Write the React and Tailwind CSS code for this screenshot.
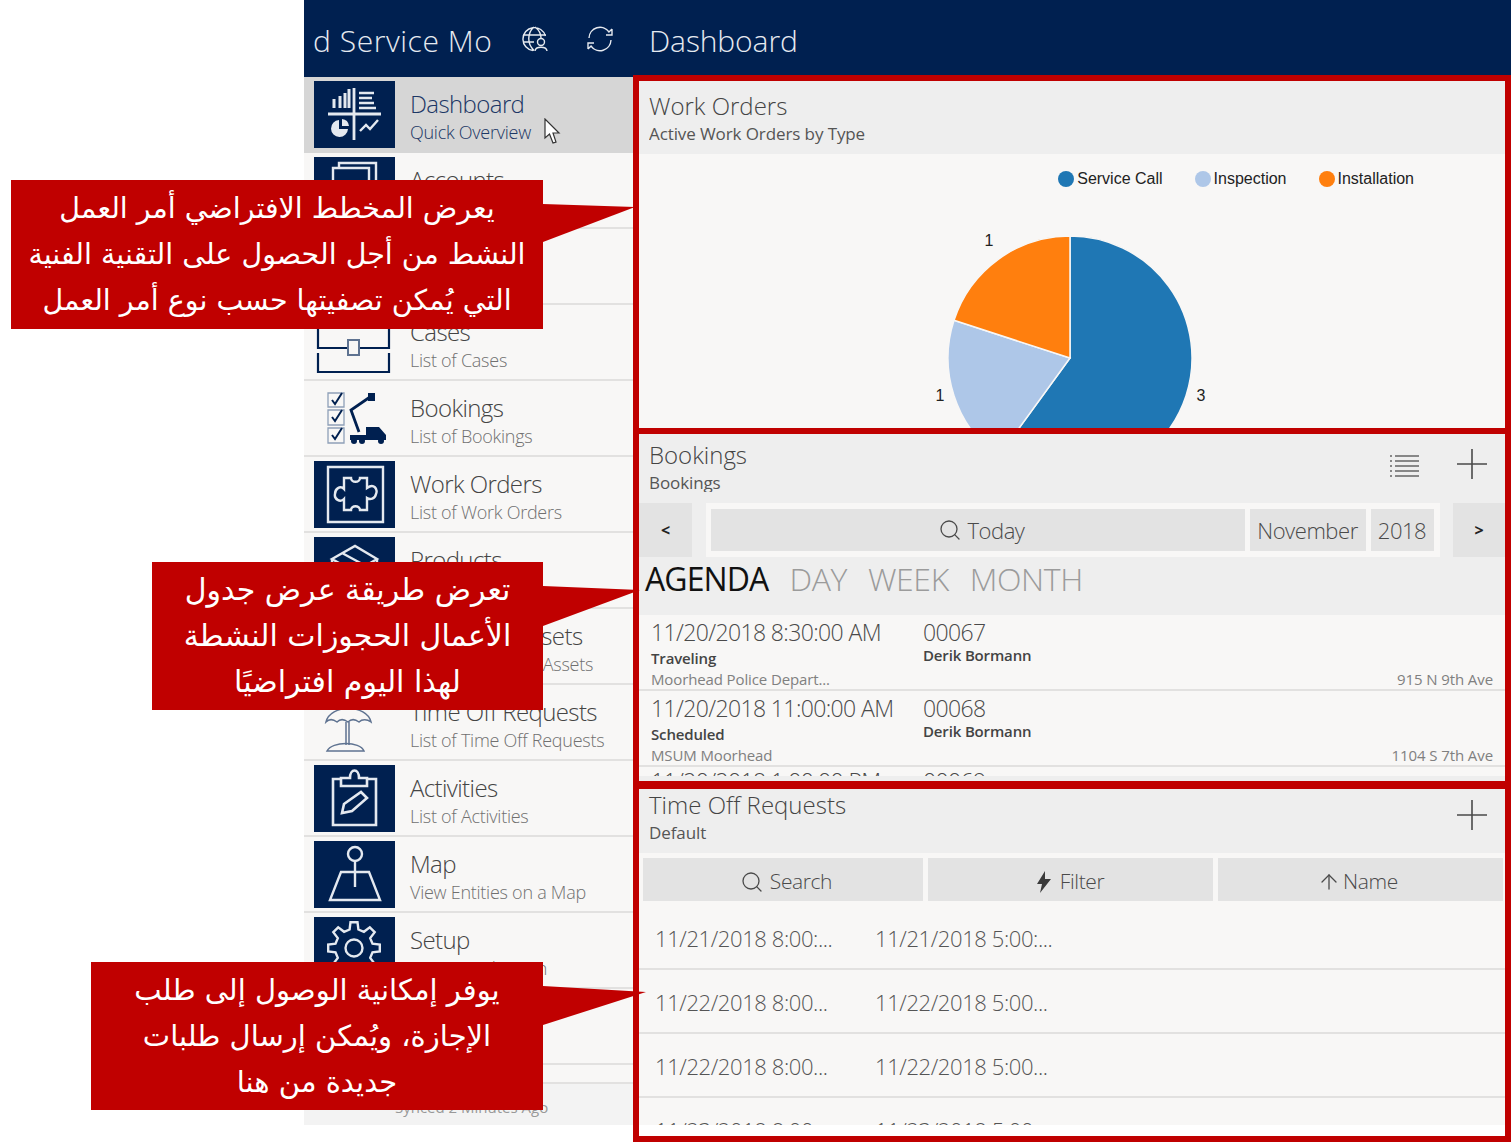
import { Search, ArrowUp } from 'lucide-react'

const navy = '#002050'

function IconBox({ children }) {
  return (
    <div className="h-[67px] w-[81px] shrink-0 bg-[#002050]">
      <svg viewBox="0 0 81 67" className="h-full w-full" fill="none" stroke="#e4e9f0" strokeWidth="2.4">
        {children}
      </svg>
    </div>
  )
}

function PlainIcon({ children }) {
  return (
    <div className="h-[67px] w-[81px] shrink-0">
      <svg viewBox="0 0 81 67" className="h-full w-full" fill="none" stroke={navy} strokeWidth="2">
        {children}
      </svg>
    </div>
  )
}

// eight toothed gear outline for the setup tile
function gearPath(cx, cy, outer, inner, teeth) {
  const pts = []
  const step = (Math.PI * 2) / teeth
  for (let i = 0; i < teeth; i++) {
    const a = i * step - Math.PI / 2
    const at = (r, o) => `${(cx + r * Math.cos(a + o)).toFixed(1)} ${(cy + r * Math.sin(a + o)).toFixed(1)}`
    pts.push(at(outer, -step * 0.17), at(outer, step * 0.17), at(inner, step * 0.3), at(inner, step * 0.7))
  }
  return `M${pts.join('L')}Z`
}

const icons = {
  dashboard: (
    <IconBox>
      <path d="M14 33H67M40 7V59" strokeWidth="2.8" />
      <path d="M20 27V18M26 27V15M31 27V12M35 27V8" strokeWidth="3" />
      <path d="M45 12H60M45 17H58M45 22H60M45 27H62" strokeWidth="2.4" />
      <path d="M25 39A8.500 8.500 0 1 0 34 48H25Z" fill="#e4e9f0" stroke="none" />
      <path d="M28 38A8 8 0 0 1 35 45H28Z" fill="#e4e9f0" stroke="none" />
      <path d="M46 50l6-6 4 4 8-9" />
    </IconBox>
  ),
  accounts: (
    <IconBox>
      <path d="M25 11V6H62V42" />
      <path d="M19 11H55V58H19Z" />
    </IconBox>
  ),
  contacts: (
    <IconBox>
      <circle cx="40" cy="24" r="10" />
      <path d="M20 56C22 40 58 40 60 56" />
    </IconBox>
  ),
  cases: (
    <PlainIcon>
      <path d="M4 20V39H34M45 39H75V20" strokeWidth="2.2" />
      <path d="M4 44V63H75V44" strokeWidth="2.2" />
      <rect x="34" y="31" width="11" height="15" stroke="#5f7391" />
    </PlainIcon>
  ),
  bookings: (
    <PlainIcon>
      <path d="M14 8H30V22H14ZM14 25H30V40H14ZM14 43H30V58H14Z" stroke="#8ea0b8" strokeWidth="1.3" />
      <path d="M18 15l3 4 7-11M18 32l3 4 7-11M18 50l3 4 7-11" />
      <path d="M45 47L37 25 56 12" strokeWidth="2.800" />
      <rect x="54" y="8" width="7" height="8" fill={navy} stroke="none" />
      <path d="M36 50H52V42H65L72 50V55H36Z" fill={navy} stroke="none" />
      <circle cx="40" cy="56" r="3" fill={navy} stroke="none" />
      <circle cx="48" cy="56" r="3" fill={navy} stroke="none" />
      <circle cx="67" cy="56" r="3" fill={navy} stroke="none" />
    </PlainIcon>
  ),
  workorders: (
    <IconBox>
      <path d="M14 6H69V61H14Z" />
      <path d="M30 17H37C37 22 46 22 46 17H53V27C60 22 64 28 62 33 61 38 56 39 53 37V49H46C46 44 37 44 37 49H30V38C26 42 20 38 21 33 21 28 26 24 30 28Z" />
    </IconBox>
  ),
  products: (
    <IconBox>
      <path d="M18 22L41 9 63 22 41 35ZM18 22V48L41 60 63 48V22M41 35V60M28 16L52 29" />
    </IconBox>
  ),
  assets: (
    <PlainIcon>
      <rect x="20" y="15" width="40" height="40" />
    </PlainIcon>
  ),
  timeoff: (
    <PlainIcon>
      <path d="M12 33C16 15 53 15 57 33C53 30 48 30 45 33C41 30 37 30 34 33C30 30 26 30 23 33C19 30 15 30 12 33Z" stroke="#5f7391" strokeWidth="1.5" />
      <path d="M32 33V56M35 33V56" stroke="#5f7391" strokeWidth="1.5" />
      <path d="M13 62C18 52 46 52 50 62Z" stroke="#5f7391" strokeWidth="1.5" />
    </PlainIcon>
  ),
  activities: (
    <IconBox>
      <path d="M27 14H19V60H62V14H53" strokeWidth="2.6" />
      <path d="M27 21V13H36C36 3 45 3 45 13H53V21Z" strokeWidth="2.6" />
      <path d="M28 48L30 39 47 27 53 33 38 46Z" strokeWidth="2.6" />
    </IconBox>
  ),
  map: (
    <IconBox>
      <circle cx="41" cy="13" r="7" />
      <path d="M41 20V46" />
      <path d="M27 31H55L66 59H16Z" />
    </IconBox>
  ),
  setup: (
    <IconBox>
      <circle cx="40" cy="31" r="8.500" />
      <path d={gearPath(40, 31, 26, 19, 8)} />
    </IconBox>
  ),
  blank: <div className="h-[67px] w-[81px] shrink-0" />,
}

const navItems = [
  { icon: 'dashboard', title: 'Dashboard', sub: 'Quick Overview', active: true },
  { icon: 'accounts', title: 'Accounts', sub: 'List of Accounts' },
  { icon: 'contacts', title: 'Contacts', sub: 'List of Contacts' },
  { icon: 'cases', title: 'Cases', sub: 'List of Cases' },
  { icon: 'bookings', title: 'Bookings', sub: 'List of Bookings' },
  { icon: 'workorders', title: 'Work Orders', sub: 'List of Work Orders' },
  { icon: 'products', title: 'Products', sub: 'List of Products' },
  { icon: 'assets', title: 'Customer Assets', sub: 'List of Customer Assets' },
  { icon: 'timeoff', title: 'Time Off Requests', sub: 'List of Time Off Requests' },
  { icon: 'activities', title: 'Activities', sub: 'List of Activities' },
  { icon: 'map', title: 'Map', sub: 'View Entities on a Map' },
  { icon: 'setup', title: 'Setup', sub: 'Setup Application' },
  { icon: 'blank', title: 'Sync', sub: 'Sync Data' },
]

function NavItem({ item }) {
  return (
    <div className={`flex h-[76px] items-center gap-[15px] border-b-2 pl-[10px] ${item.active ? 'border-[#d6d6d6] bg-[#d6d6d6]' : 'border-[#e2e1e0]'}`}>
      {icons[item.icon]}
      <div className="pt-[5px]">
        <div className={`text-[24px] leading-[31px] tracking-[-0.6px] font-light ${item.active ? 'text-[#1c3765]' : 'text-[#444444]'}`}>{item.title}</div>
        <div className={`text-[18px] leading-[26px] tracking-[-0.26px] font-light ${item.active ? 'text-[#1c3765]' : 'text-[#707070]'}`}>{item.sub}</div>
      </div>
    </div>
  )
}

function Plus() {
  return (
    <svg viewBox="0 0 32 32" className="h-8 w-8" fill="none" stroke="#4a4a4a" strokeWidth="1.6">
      <path d="M16 1V31M1 16H31" />
    </svg>
  )
}

function PanelHead({ title, sub, subClass, children, className }) {
  return (
    <div className={`flex shrink-0 justify-between bg-[#eeeeee] pl-[10px] ${className}`}>
      <div>
        <div className="text-[24px] leading-[32px] font-light text-[#444444]">{title}</div>
        <div className={`overflow-hidden text-[17px] leading-[24px] tracking-[-0.1px] text-[#555555] ${subClass}`}>{sub}</div>
      </div>
      {children}
    </div>
  )
}

function Legend({ color, label }) {
  return (
    <div className="flex items-center gap-[3px]">
      <span className="h-4 w-4 rounded-full" style={{ background: color }} />
      <span className="font-['Liberation_Sans',sans-serif] text-[16px] text-[#222222]">{label}</span>
    </div>
  )
}

function WorkOrdersPanel() {
  return (
    <section className="flex h-[347px] flex-col overflow-hidden bg-[#f8f7f6]">
      <PanelHead title="Work Orders" sub="Active Work Orders by Type" className="h-[73px] pt-[9px]" />
      <div className="flex justify-end gap-[32px] pt-[13px] pr-[91px]">
        <Legend color="#1f77b4" label="Service Call" />
        <Legend color="#aec7e8" label="Inspection" />
        <Legend color="#ff7f0e" label="Installation" />
      </div>
      <svg viewBox="0 0 866 240" className="mt-[10px] h-[240px] w-[866px] shrink-0">
        <g stroke="#f8f7f6" strokeWidth="1.5">
          <path d="M431 157V35A122 122 0 1 1 359.3 255.7Z" fill="#1f77b4" />
          <path d="M431 157L359.3 255.7A122 122 0 0 1 315 119.3Z" fill="#aec7e8" />
          <path d="M431 157L315 119.3A122 122 0 0 1 431 35Z" fill="#ff7f0e" />
        </g>
        <g fontFamily="Liberation Sans, sans-serif" fontSize="16" fill="#222222" textAnchor="middle">
          <text x="350" y="45">1</text>
          <text x="301" y="200">1</text>
          <text x="562" y="200">3</text>
        </g>
      </svg>
    </section>
  )
}

function Booking({ time, no, status, place, address, className = '' }) {
  return (
    <div className={`flex h-[76px] shrink-0 border-b-2 border-[#e2e1e0] pr-3 pl-3 ${className}`}>
      <div className="w-[272px] shrink-0">
        <div className="text-[23px] leading-[35px] tracking-[-0.62px] font-light text-[#4a4a4a]">{time}</div>
        <div className="-mt-[2px] text-[15px] leading-[20px] font-semibold tracking-[-0.15px] text-[#444444]">{status}</div>
        <div className="mt-px text-[15px] leading-[21px] tracking-[-0.12px] text-[#808080]">{place}</div>
      </div>
      <div className="flex grow flex-col">
        <div className="text-[23px] leading-[35px] tracking-[-0.62px] font-light text-[#4a4a4a]">{no}</div>
        <div className="-mt-[2px] text-[15px] leading-[14px] font-semibold tracking-[-0.15px] text-[#444444]">Derik Bormann</div>
        <div className="mt-auto -mb-px self-end text-[15px] leading-[21px] tracking-[-0.09px] text-[#808080]">{address}</div>
      </div>
    </div>
  )
}

function BookingsPanel() {
  return (
    <section className="flex h-[347px] flex-col overflow-hidden bg-[#eeeeee]">
      <PanelHead title="Bookings" sub="Bookings" subClass="h-[21px]" className="h-[69px] overflow-hidden pt-[5px]">
        <div className="flex items-start gap-[36px] pt-[9px] pr-[17px]">
          <svg viewBox="0 0 32 32" className="mt-px h-8 w-8" fill="none" stroke="#666666" strokeWidth="1.6">
            <path d="M7 7H31M7 12H31M7 17H31M7 22H31M7 27H31" />
            <path d="M2 7H4M2 12H4M2 17H4M2 22H4M2 27H4" />
          </svg>
          <Plus />
        </div>
      </PanelHead>
      <div className="flex h-[54px] shrink-0 justify-between">
        <div className="grid w-[53px] place-items-center bg-[#e3e3e3] text-[16px] font-bold text-[#222222]">&lt;</div>
        <div className="flex w-[734px] gap-[5px] bg-[#f8f7f6] p-[6px] pl-[5px] text-[22px] tracking-[-0.45px] font-light text-[#4a4a4a]">
          <div className="flex grow items-center justify-center gap-[5px] bg-[#e3e3e3] pl-[8px]">
            <Search size={24} strokeWidth={1.3} />
            Today
          </div>
          <div className="grid w-[116px] place-items-center bg-[#e3e3e3]">November</div>
          <div className="grid w-[63px] place-items-center bg-[#e3e3e3]">2018</div>
        </div>
        <div className="grid w-[52px] place-items-center bg-[#e3e3e3] text-[16px] font-bold text-[#222222]">&gt;</div>
      </div>
      <div className="flex h-[58px] shrink-0 items-center gap-[21px] pb-[14px] pl-[6px] text-[32px] tracking-[-0.4px] font-light text-[#9b9b9b]">
        <span className="font-normal tracking-[-0.9px] text-[#111111]">AGENDA</span>
        <span>DAY</span>
        <span>WEEK</span>
        <span>MONTH</span>
      </div>
      <div className="flex h-[161px] shrink-0 flex-col overflow-hidden bg-[#f8f7f6]">
        <Booking time="11/20/2018 8:30:00 AM" no="00067" status="Traveling" place="Moorhead Police Depart..." address="915 N 9th Ave" />
        <Booking time="11/20/2018 11:00:00 AM" no="00068" status="Scheduled" place="MSUM Moorhead" address="1104 S 7th Ave" />
        <Booking className="-mt-[3px]" time="11/20/2018 1:00:00 PM" no="00069" status="Scheduled" place="Moorhead" address="" />
      </div>
    </section>
  )
}

function ToolButton({ children, className }) {
  return <div className={`flex h-[43px] items-center justify-center bg-[#e3e3e3] pt-1 text-[21px] tracking-[-0.4px] font-light text-[#4a4a4a] ${className}`}>{children}</div>
}

function OffRow({ from, to }) {
  return (
    <div className="flex h-[64px] shrink-0 items-center border-b-2 border-[#e2e1e0] pt-[2px] pl-4 text-[22px] tracking-[-0.4px] font-light text-[#555555]">
      <span className="w-[220px]">{from}</span>
      <span>{to}</span>
    </div>
  )
}

function TimeOffPanel() {
  return (
    <section className="flex h-[347px] flex-col bg-white">
      <PanelHead title="Time Off Requests" sub="Default" className="h-[64px]">
        <div className="pt-[10px] pr-[17px]">
          <Plus />
        </div>
      </PanelHead>
      <div className="flex h-[272px] flex-col overflow-hidden bg-[#f8f7f6]">
        <div className="flex shrink-0 gap-[5px] pt-[5px] pl-[4px]">
          <ToolButton className="w-[280px] gap-[6px] pl-[6px]">
            <Search size={24} strokeWidth={1.3} />
            Search
          </ToolButton>
          <ToolButton className="w-[285px] gap-[9px]">
            <svg viewBox="0 0 14 22" className="h-[22px] w-[14px]" fill="#3a3a3a">
              <path d="M8 0L0 13H5L3 22L14 8H8Z" />
            </svg>
            Filter
          </ToolButton>
          <ToolButton className="w-[285px] gap-[2px] pr-[6px]">
            <ArrowUp size={24} strokeWidth={1.3} />
            Name
          </ToolButton>
        </div>
        <div className="mt-[5px] flex flex-col">
          <OffRow from="11/21/2018 8:00:..." to="11/21/2018 5:00:..." />
          <OffRow from="11/22/2018 8:00..." to="11/22/2018 5:00..." />
          <OffRow from="11/22/2018 8:00..." to="11/22/2018 5:00..." />
          <OffRow from="11/23/2018 8:00..." to="11/23/2018 5:00..." />
        </div>
      </div>
    </section>
  )
}

function Callout({ lines, className, tail, textSize }) {
  return (
    <div className={`absolute bg-[#c00000] ${className}`}>
      <div dir="rtl" className={`flex h-full flex-col items-center justify-center font-['DejaVu_Sans',sans-serif] leading-[46px] text-white ${textSize}`}>
        {lines.map(line => (
          <div key={line} className="whitespace-nowrap">
            {line}
          </div>
        ))}
      </div>
      <svg className="absolute top-[24px] left-full h-[40px] w-[104px]" viewBox="0 0 104 40" fill="#c00000">
        <polygon points={tail} />
      </svg>
    </div>
  )
}

export default function App() {
  return (
    <div className="relative flex h-[1142px] w-[1511px] overflow-hidden bg-white font-['Open_Sans',sans-serif]">
      <div className="w-[304px] shrink-0" />
      <div className="flex grow flex-col">
        <header className="flex h-[75px] shrink-0 items-center bg-[#002050] text-[#e6eaf0]">
          <div className="flex w-[345px] items-center pl-[9px]">
            <span className="w-[208px] pt-[6px] text-[30px] tracking-[0.55px] font-light">d Service Mo</span>
            <svg viewBox="0 0 28 28" className="mt-[3px] h-7 w-7" fill="none" stroke="#e6eaf0" strokeWidth="1.4">
              <path d="M24.500 11A11.500 11.500 0 1 0 12 25.500M2 10H25M2 17H13M13 2C6 8 6 19 13 25.500M14 2C18 5 20 9 20 13" />
              <circle cx="20" cy="17" r="3.500" />
              <path d="M14 26C14.500 21 25.500 21 26 26" />
            </svg>
            <svg viewBox="0 0 28 28" className="mt-[3px] ml-[37px] h-7 w-7" fill="none" stroke="#e6eaf0" strokeWidth="1.4">
              <path d="M3 13A11 11 0 0 1 23 7L26 4M26 4V10H20" />
              <path d="M25 15A11 11 0 0 1 5 21L2 24M2 24V18H8" />
            </svg>
          </div>
          <span className="pt-[6px] text-[30px] tracking-[-0.1px] font-light">Dashboard</span>
        </header>
        <div className="flex grow">
          <aside className="flex h-[1050px] w-[329px] shrink-0 flex-col border-t-2 border-[#002050] bg-[#f8f7f6]">
            {navItems.map(item => (
              <NavItem key={item.title} item={item} />
            ))}
            <div className="h-[19px] shrink-0 border-b-2 border-[#e2e1e0]" />
            <div className="grow bg-[#f3f3f3] pt-[12px] pl-[91px] text-[15px] text-[#999999]">Synced 2 Minutes Ago</div>
          </aside>
          <main className="flex grow flex-col bg-[#c00000] p-[6px]">
            <WorkOrdersPanel />
            <div className="h-[6px] shrink-0" />
            <BookingsPanel />
            <div className="h-[8px] shrink-0" />
            <TimeOffPanel />
          </main>
        </div>
      </div>

      {/* cursor over the active nav item */}
      <svg viewBox="0 0 17 27" className="absolute top-[118px] left-[544px] h-[27px] w-[17px]" fill="#ffffff" stroke="#333333" strokeWidth="1.2">
        <path d="M1 1V20L5.500 16 9 25 12 24 9 15H15Z" />
      </svg>

      <Callout
        className="top-[180px] left-[11px] h-[149px] w-[532px]"
        textSize="text-[28.5px]"
        tail="0,0 92,3 0,38"
        lines={['يعرض المخطط الافتراضي أمر العمل', 'النشط من أجل الحصول على التقنية الفنية', 'التي يُمكن تصفيتها حسب نوع أمر العمل']}
      />
      <Callout
        className="top-[562px] left-[152px] h-[148px] w-[391px]"
        textSize="text-[30px]"
        tail="0,0 97,4 0,40"
        lines={['تعرض طريقة عرض جدول', 'الأعمال الحجوزات النشطة', 'لهذا اليوم افتراضيًا']}
      />
      <Callout
        className="top-[962px] left-[91px] h-[148px] w-[452px]"
        textSize="text-[29px]"
        tail="0,0 103,6 0,39"
        lines={['يوفر إمكانية الوصول إلى طلب', 'الإجازة، ويُمكن إرسال طلبات', 'جديدة من هنا']}
      />
    </div>
  )
}
